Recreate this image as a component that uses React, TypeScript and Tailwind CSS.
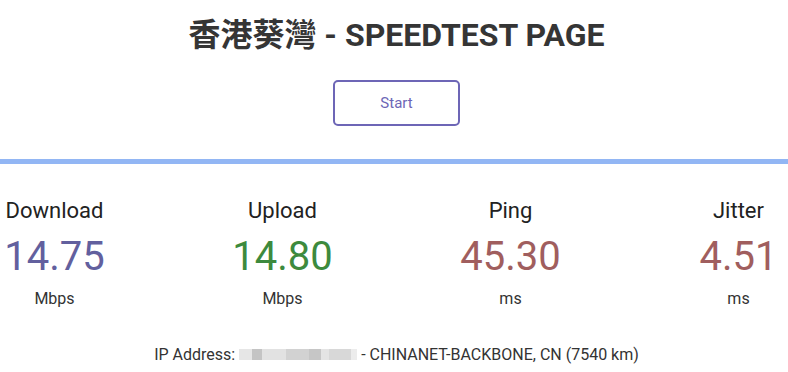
import React from "react";

const stats = [
  { label: "Download", value: "14.75", unit: "Mbps", color: "text-[#62609e]" },
  { label: "Upload", value: "14.80", unit: "Mbps", color: "text-[#3d8a3d]" },
  { label: "Ping", value: "45.30", unit: "ms", color: "text-[#a05e5e]" },
  { label: "Jitter", value: "4.51", unit: "ms", color: "text-[#a05e5e]" },
];

// blurred IP placeholder blocks
const blur = [
  { w: "w-[13px]", c: "bg-[#e6e6e6]" },
  { w: "w-[10px]", c: "bg-[#c4c4c4]" },
  { w: "w-[24px]", c: "bg-[#e2e2e2]" },
  { w: "w-[23px]", c: "bg-[#d2d2d2]" },
  { w: "w-[12px]", c: "bg-[#c6c6c6]" },
  { w: "w-[8px]", c: "bg-[#e4e4e4]" },
  { w: "w-[22px]", c: "bg-[#d8d8d8]" },
  { w: "w-[6px]", c: "bg-[#ececec]" },
];

const App = () => {
  return (
    <div className="w-[788px] h-[372px] overflow-hidden bg-white pl-[5px] font-['Roboto','Noto_Sans_CJK_TC',sans-serif]">
      <div className="flex flex-col items-center">
        <h1 className="pt-[16px] text-[32px] leading-[38px] font-bold text-[#353535]">
          香港葵灣 - SPEEDTEST PAGE
        </h1>
        <button
          type="button"
          className="mt-[26px] w-[127px] h-[46px] border-2 border-[#6d66b6] rounded-[5px] text-[15px] text-[#6d66b6]"
        >
          Start
        </button>
      </div>
      <div className="mt-[33px] -ml-[5px] w-[788px] h-[5px] bg-[#92b6f4]" />
      <div className="flex justify-center mt-[34px]">
        {stats.map((s) => (
          <div key={s.label} className="w-[228px] shrink-0 flex flex-col items-center">
            <div className="text-[22px] leading-[26px] text-[#222]">{s.label}</div>
            <div className={`mt-[9px] text-[40px] leading-[48px] ${s.color}`}>{s.value}</div>
            <div className="mt-[8px] text-[16px] leading-[19px] text-[#333]">{s.unit}</div>
          </div>
        ))}
      </div>
      <div className="mt-[37px] flex justify-center items-center text-[16px] leading-[19px] text-[#333]">
        <span>IP Address:&nbsp;</span>
        <span className="flex h-[11px]">
          {blur.map((b, i) => (
            <span key={i} className={`${b.w} ${b.c} h-full`} />
          ))}
        </span>
        <span>&nbsp;- CHINANET-BACKBONE, CN (7540 km)</span>
      </div>
    </div>
  );
};

export default App;
